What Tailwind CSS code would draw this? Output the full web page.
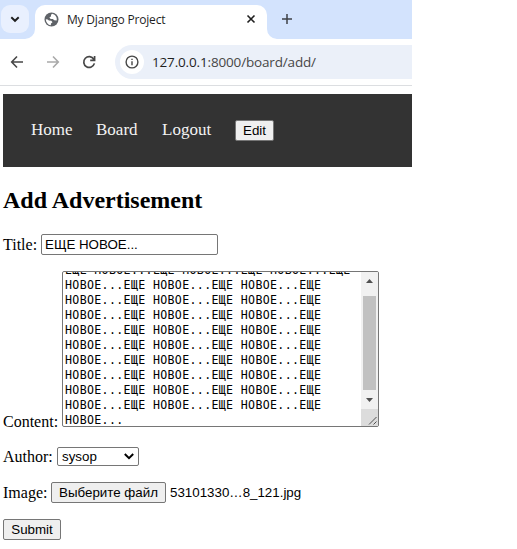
<!DOCTYPE html>
<html lang="ru">
<head>
<meta charset="utf-8">
<title>My Django Project</title>
<script src="https://cdn.jsdelivr.net/npm/@tailwindcss/browser@4"></script>
</head>
<body class="h-[549px] w-[517px] overflow-hidden bg-white text-black">
<div class="w-[412px]">
  <!-- tab strip -->
  <div class="flex h-[39px] items-start bg-[#d3e3fd]">
    <div class="relative h-[39px] w-[35px] pt-[5px] pl-[1px]">
      <div class="flex size-7 items-center justify-center rounded-[9px] bg-[#e9f0fe]">
        <svg class="size-7" viewBox="0 0 28 28" fill="none" stroke="#1f1f1f" stroke-width="1.9"><path d="M10.3 12.2 14 15.8l3.7-3.6"/></svg>
      </div>
      <svg class="absolute right-0 bottom-0 h-[10px] w-[10px]" viewBox="0 0 10 10"><path d="M10 0v10H0A10 10 0 0 0 10 0Z" fill="#fff"/></svg>
    </div>
    <div class="mt-[5px] flex h-[34px] w-[232px] items-center rounded-t-[10px] bg-white pl-[9px]">
      <svg class="-mt-[6px] size-[15px] shrink-0" viewBox="0 0 15 15"><circle cx="7.5" cy="7.5" r="7" fill="#5f6368"/><path d="M8.3 1.7 7 2.8v1.7L5.4 5.2 6.6 7h2.2l1.5 1.3 2.4.1c.6-2.8-.9-5.7-4.4-6.7ZM1.8 7.2c.1 3.2 2.2 5.6 5 6.1l.2-1.7 1.5-1.4-1.2-1.4-2.4-.2-1.2-1.2Z" fill="#fff"/></svg>
      <span class="-mt-[5px] ml-[8px] w-[179px] whitespace-nowrap font-['Open_Sans',sans-serif] text-[12px] leading-4 tracking-[-0.2px] text-[#1f1f1f]">My Django Project</span>
      <svg class="-mt-[6px] size-[10px] shrink-0" viewBox="0 0 10 10" stroke="#1f1f1f" stroke-width="1.6"><path d="m1.5 1.5 7 7m0-7-7 7"/></svg>
    </div>
    <div class="flex h-[39px] items-end">
      <svg class="h-[10px] w-[10px]" viewBox="0 0 10 10"><path d="M0 0v10h10A10 10 0 0 1 0 0Z" fill="#fff"/></svg>
      <svg class="mb-[14px] ml-[4px] size-3" viewBox="0 0 12 12" stroke="#3f4247" stroke-width="1.5"><path d="M1 6h10M6 1v10"/></svg>
    </div>
  </div>
  <!-- toolbar -->
  <div class="flex h-[47px] items-start border-b border-[#dcdee1] pt-[6px]">
    <div class="flex h-[34px] w-[115px] items-center pl-[9px]">
      <svg class="size-4" viewBox="0 0 16 16" fill="none" stroke="#474747" stroke-width="1.6"><path d="M14 8H3M8 2.5 2.7 8 8 13.5"/></svg>
      <svg class="ml-5 size-4" viewBox="0 0 16 16" fill="none" stroke="#a9a9a9" stroke-width="1.6"><path d="M2 8h11M8 2.5 13.3 8 8 13.5"/></svg>
      <svg class="ml-5 size-4" viewBox="0 0 16 16" fill="none" stroke="#474747" stroke-width="1.7"><path d="M12.8 5.2A5.4 5.4 0 1 0 13.4 9.4M13.6 2v4.4H9.2"/></svg>
    </div>
    <div class="flex h-[34px] flex-1 items-center rounded-l-full bg-[#ebf0f9] pl-[5px]">
      <div class="flex size-6 items-center justify-center rounded-full bg-white">
        <svg class="size-[14px]" viewBox="0 0 14 14" fill="none" stroke="#474747" stroke-width="1.4"><circle cx="7" cy="7" r="5.9"/><path d="M7 6.2v4M7 3.7v1.4"/></svg>
      </div>
      <span class="ml-[8px] whitespace-nowrap font-['Open_Sans',sans-serif] text-[13.5px] leading-5 tracking-[-0.16px] text-[#474747]"><span class="text-[#1f1f1f]">127.0.0.1</span>:8000/board/add/</span>
    </div>
  </div>
  <!-- page -->
  <div class="pt-[8px] pl-[3px] font-['Liberation_Serif',serif] text-[16px] leading-[18px]">
    <nav class="flex h-[73px] items-center bg-[#333] pl-[28px] text-[17px] text-[#f2f2f2]">
      <a class="-mt-[2px] w-[65px]">Home</a><a class="-mt-[2px] w-[66px]">Board</a><a class="-mt-[2px] w-[73px]">Logout</a>
      <button class="h-[21px] w-[39px] rounded-[2px] border border-[#767676] bg-[#efefef] font-['Liberation_Sans',sans-serif] text-[13.333px] leading-[15px] text-black">Edit</button>
    </nav>
    <h2 class="mt-[20px] text-[24px] leading-[27px] font-bold">Add Advertisement</h2>
    <div class="mt-[20px] flex h-[21px] items-center">
      <label class="w-[38px]">Title:</label>
      <div class="h-[21px] w-[177px] rounded-[2px] border border-[#767676] pl-[3px] font-['Liberation_Sans',sans-serif] text-[13.333px] leading-[19px] whitespace-nowrap">ЕЩЕ НОВОЕ...</div>
    </div>
    <div class="mt-[16px] flex h-[156px] items-end">
      <label class="mb-[-4px] w-[59px]">Content:</label>
      <div class="flex h-[156px] w-[317px] overflow-hidden rounded-[2px] border border-[#767676]">
        <div class="-mb-[2px] flex h-[156px] w-[298px] flex-col justify-end pl-[2px] font-['DejaVu_Sans_Mono',monospace] text-[11.6px] leading-[15px] tracking-[0.343px] whitespace-pre"><div>ЕЩЕ НОВОЕ...ЕЩЕ НОВОЕ...ЕЩЕ НОВОЕ...ЕЩЕ</div><div>НОВОЕ...ЕЩЕ НОВОЕ...ЕЩЕ НОВОЕ...ЕЩЕ</div><div>НОВОЕ...ЕЩЕ НОВОЕ...ЕЩЕ НОВОЕ...ЕЩЕ</div><div>НОВОЕ...ЕЩЕ НОВОЕ...ЕЩЕ НОВОЕ...ЕЩЕ</div><div>НОВОЕ...ЕЩЕ НОВОЕ...ЕЩЕ НОВОЕ...ЕЩЕ</div><div>НОВОЕ...ЕЩЕ НОВОЕ...ЕЩЕ НОВОЕ...ЕЩЕ</div><div>НОВОЕ...ЕЩЕ НОВОЕ...ЕЩЕ НОВОЕ...ЕЩЕ</div><div>НОВОЕ...ЕЩЕ НОВОЕ...ЕЩЕ НОВОЕ...ЕЩЕ</div><div>НОВОЕ...ЕЩЕ НОВОЕ...ЕЩЕ НОВОЕ...ЕЩЕ</div><div>НОВОЕ...ЕЩЕ НОВОЕ...ЕЩЕ НОВОЕ...ЕЩЕ</div><div>НОВОЕ...</div></div>
        <div class="flex w-[17px] flex-col items-center bg-[#f1f1f1]">
          <svg class="h-[24px] w-[17px] shrink-0" viewBox="0 0 17 24"><path d="M5 11 8.5 7 12 11Z" fill="#505050"/></svg>
          <div class="h-[94px] w-[13px] shrink-0 bg-[#c1c1c1]"></div>
          <svg class="h-[19px] w-[17px] shrink-0" viewBox="0 0 17 19"><path d="M5 8h7l-3.5 4Z" fill="#505050"/></svg>
          <svg class="h-[17px] w-[17px] shrink-0 bg-[#dcdcdc]" viewBox="0 0 17 17" stroke="#505050"><path d="m8 15.5 7.5-7.5M12.5 15.5l3-3"/></svg>
        </div>
      </div>
    </div>
    <div class="mt-[20px] flex h-[19px] items-center">
      <label class="w-[54px]">Author:</label>
      <div class="flex h-[19px] w-[82px] items-center justify-between rounded-[2px] border border-[#767676] pr-[4px] pl-[4px] font-['Liberation_Sans',sans-serif] text-[13.333px] leading-[17px]">sysop
        <svg class="h-[7px] w-[10px]" viewBox="0 0 10 7" fill="none" stroke="#000" stroke-width="2"><path d="m.8 1 4.2 4.2L9.2 1"/></svg>
      </div>
    </div>
    <div class="mt-[16px] flex h-[21px] items-center whitespace-nowrap">
      <label class="w-[48px]">Image:</label>
      <button class="h-[21px] w-[115px] rounded-[2px] border border-[#767676] bg-[#efefef] font-['Liberation_Sans',sans-serif] text-[13.333px] leading-[15px]">Выберите файл</button>
      <span class="ml-[4px] font-['Liberation_Sans',sans-serif] text-[13.333px]">53101330…8_121.jpg</span>
    </div>
    <button class="mt-[16px] block h-[21px] w-[58px] rounded-[2px] border border-[#767676] bg-[#efefef] font-['Liberation_Sans',sans-serif] text-[13.333px] leading-[15px]">Submit</button>
  </div>
</div>
</body>
</html>
